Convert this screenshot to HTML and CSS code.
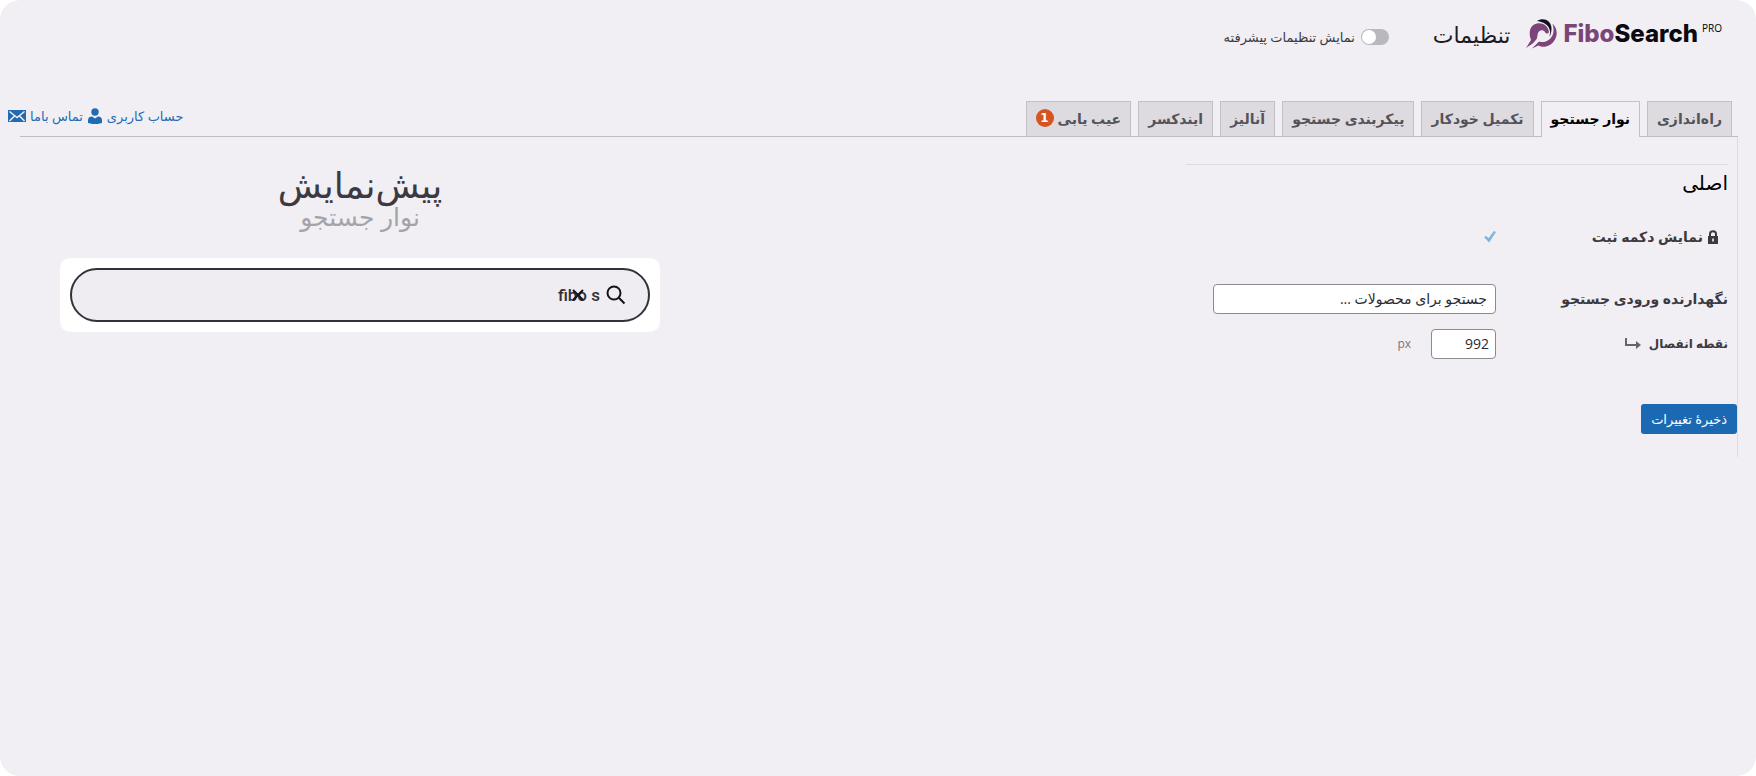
FILE: index.html
```html
<!doctype html>
<html lang="fa" dir="rtl">
  <head>
    <meta charset="UTF-8" />
    <meta name="viewport" content="width=device-width, initial-scale=1.0" />
    <title>FiboSearch - تنظیمات</title>
    <link rel="stylesheet" href="styles.css">
  </head>
  <body>
    <main class="page">
      <header class="header">
        <div class="logo" dir="ltr">
          <svg class="logo-icon" viewBox="0 0 31 30" aria-hidden="true">
            <path fill="#7c4579" d="M0 29 L5 21 C2 13 4 6 11 4.5 C17 3.5 22 7 23 13 C22 15 20 15 19 13 C17 10 13 11 12 14 C11 17 12 19 9 22 C7 25 4 26 0 29Z" />
            <path fill="#7c4579" d="M6 29.5 L13 22.5 C19 24.5 25 21 27 15 C28 11 27.5 8 26.5 4.5 C31 9 32 15 29 20.5 C25 28 17 29 12.5 26.5 Z" />
            <path fill="#14101a" d="M11 2 C17 -2 25 1 25.500 9 C25.500 12 25 15 23.500 18 C23.500 16 24.500 14 24 12 C23 6 18 3 11 2Z" />
          </svg>
          <span class="logo-text"><span class="logo-fibo">Fibo</span>Search</span>
          <sup class="logo-pro">PRO</sup>
        </div>
        <h1 class="page-title">تنظیمات</h1>
        <label class="advanced">
          <input type="checkbox" class="switch" />
          <span>نمایش تنظیمات پیشرفته</span>
        </label>
      </header>

      <div class="tab-bar">
        <nav class="tabs">
          <a href="#" class="tab">راه‌اندازی</a>
          <a href="#" class="tab tab-active">نوار جستجو</a>
          <a href="#" class="tab">تکمیل خودکار</a>
          <a href="#" class="tab">پیکربندی جستجو</a>
          <a href="#" class="tab">آنالیز</a>
          <a href="#" class="tab">ایندکسر</a>
          <a href="#" class="tab">عیب یابی <span class="badge">1</span></a>
        </nav>
        <div class="links">
          <a href="#" class="link">
            <span>حساب کاربری</span>
            <svg width="16" height="16" viewBox="0 0 16 16" aria-hidden="true">
              <circle cx="8" cy="4" r="3.7" />
              <path d="M1 15 V12 C1 9.5 3 8.5 5 8.5 L8 10.5 L11 8.5 C13 8.5 15 9.5 15 12 V15 C11 16.5 5 16.5 1 15Z" />
            </svg>
          </a>
          <a href="#" class="link">
            <span>تماس باما</span>
            <svg width="18" height="14" viewBox="0 0 18 14" aria-hidden="true">
              <rect x="0" y="1" width="18" height="12" />
              <path class="mail-lines" d="M1.5 2.5 L9 8.5 L16.5 2.5 M1.5 12 L6.5 7 M16.5 12 L11.5 7" />
            </svg>
          </a>
        </div>
      </div>

      <div class="content">
        <form class="settings">
          <h2 class="section-title">اصلی</h2>
          <div class="row row-check">
            <label for="submit-button" class="row-label">
              <svg class="lock" width="10" height="14" viewBox="0 0 10 14" aria-hidden="true">
                <path d="M2 7 V4 C2 0.3 8 0.3 8 4 V7" fill="none" stroke="#3c3a41" stroke-width="2" />
                <path d="M0 6 H10 V14 H0Z M4.2 8.5 V11.5 H5.8 V8.5Z" fill="#3c3a41" fill-rule="evenodd" />
              </svg>
              نمایش دکمه ثبت
            </label>
            <input type="checkbox" id="submit-button" class="check" checked disabled />
          </div>
          <div class="row">
            <label for="placeholder" class="row-label">نگهدارنده ورودی جستجو</label>
            <input type="text" id="placeholder" class="field" value="جستجو برای محصولات ..." />
          </div>
          <div class="row">
            <label for="breakpoint" class="row-label row-label-small">
              نقطه انفصال
              <svg class="arrow" width="16" height="12" viewBox="0 0 16 12" aria-hidden="true">
                <path d="M1 0 V7 H13" fill="none" stroke="#66646b" stroke-width="2" />
                <path d="M11 3 L16 7 L11 11Z" fill="#66646b" />
              </svg>
            </label>
            <input type="text" id="breakpoint" class="field field-small" value="992" />
            <span class="unit">px</span>
          </div>
          <button type="submit" class="save">ذخیرهٔ تغییرات</button>
        </form>

        <section class="preview">
          <h2 class="preview-title">پیش‌نمایش</h2>
          <p class="preview-subtitle">نوار جستجو</p>
          <div class="preview-box">
            <div class="search">
              <svg class="search-icon" width="20" height="20" viewBox="0 0 20 20" aria-hidden="true">
                <circle cx="8" cy="8" r="6.5" />
                <path d="M12.8 12.8 L18.5 18.5" />
              </svg>
              <input type="text" class="search-input" aria-label="جستجو" value="fibo s" />
              <button type="button" class="clear" aria-label="پاک کردن">
                <svg width="12" height="12" viewBox="0 0 12 12" aria-hidden="true">
                  <path d="M1 1 L11 11 M11 1 L1 11" />
                </svg>
              </button>
            </div>
          </div>
        </section>
      </div>
    </main>
  </body>
</html>
```
FILE: styles.css
```css
* {
  margin: 0;
  padding: 0;
  box-sizing: border-box;
}

body {
  font-family: "Open Sans", "DejaVu Sans", sans-serif;
  font-size: 13px;
  color: #3c3a41;
  background: #fff;
}

input,
button {
  font-family: inherit;
}

.page {
  min-height: 100vh;
  padding: 14px 18px 0 20px;
  background: #f1eff4;
  border-radius: 20px;
}

.header {
  display: flex;
  align-items: center;
  height: 40px;
  padding-right: 16px;
}

.logo {
  display: flex;
  align-items: center;
}

.logo-icon {
  width: 31px;
  height: 30px;
  margin-right: 6px;
}

.logo-text {
  font-family: "Inter", sans-serif;
  font-size: 24px;
  font-weight: 800;
  line-height: 40px;
  color: #0c0a10;
}

.logo-fibo {
  color: #7c4579;
}

.logo-pro {
  align-self: flex-start;
  margin-left: 4px;
  padding-top: 6px;
  font-size: 10px;
  line-height: 16px;
  color: #000;
}

.page-title {
  margin-right: 16px;
  font-size: 22px;
  font-weight: 400;
  line-height: 36px;
  color: #1d1b22;
}

.advanced {
  display: flex;
  align-items: center;
  gap: 6px;
  margin-right: 44px;
  padding-top: 6px;
  font-size: 13px;
}

.switch {
  appearance: none;
  width: 28px;
  height: 16px;
  padding: 1px;
  background: #bab8bf;
  border-radius: 8px;
}

.switch::before {
  content: "";
  display: block;
  width: 14px;
  height: 14px;
  margin-right: auto;
  background: #fff;
  border-radius: 50%;
}

.tab-bar {
  display: flex;
  justify-content: space-between;
  align-items: flex-end;
  margin-top: 47px;
  border-bottom: 1px solid #bfbdc4;
}

.tabs {
  display: flex;
  gap: 7px;
  margin-right: 6px;
}

.tab {
  display: flex;
  align-items: center;
  gap: 4px;
  height: 35px;
  padding: 0 9px 2px;
  font-size: 14px;
  font-weight: 700;
  color: #55535a;
  text-decoration: none;
  white-space: nowrap;
  background: #dddbe0;
  border: 1px solid #c3c1c8;
  border-bottom: none;
}

.tab-active {
  height: 36px;
  margin-bottom: -1px;
  padding-bottom: 3px;
  color: #000;
  background: #f1eff4;
}

.badge {
  width: 18px;
  height: 18px;
  font-family: "DejaVu Sans", sans-serif;
  font-size: 12px;
  line-height: 18px;
  text-align: center;
  color: #fff;
  background: #d6541f;
  border-radius: 50%;
}

.links {
  display: flex;
  gap: 4px;
  margin: 0 0 11px -12px;
}

.link {
  display: flex;
  align-items: center;
  gap: 4px;
  font-size: 13px;
  color: #1f6cb5;
  text-decoration: none;
}

.link svg {
  fill: #1f6cb5;
}

.link .mail-lines {
  fill: none;
  stroke: #f1eff4;
  stroke-width: 1.5;
}

.content {
  display: flex;
  justify-content: space-between;
}

.settings {
  flex: 0 1 552px;
  padding-top: 27px;
  padding-bottom: 23px;
  border-right: 1px solid #dddbe0;
}

.section-title {
  margin-right: 9px;
  padding-top: 4px;
  font-size: 20px;
  font-weight: 400;
  line-height: 28px;
  color: #000;
  border-top: 1px solid #dddbe0;
}

.row {
  display: flex;
  align-items: center;
  height: 45px;
  padding-right: 9px;
}

.row-check {
  height: 79px;
}

.row-label {
  display: flex;
  align-items: center;
  flex: 0 0 232px;
  font-size: 14px;
  font-weight: 700;
}

.row-label-small {
  font-size: 12px;
}

.lock {
  margin: 0 10px 0 5px;
}

.arrow {
  margin-right: 8px;
}

.check {
  appearance: none;
  width: 12px;
  height: 12px;
  background: #7db5dd;
  clip-path: polygon(0 55%, 18% 45%, 38% 65%, 82% 5%, 100% 12%, 42% 100%);
}

.field {
  width: 283px;
  height: 30px;
  padding: 0 8px;
  font-size: 14px;
  color: #2c2a31;
  background: #fff;
  border: 1px solid #8c8a91;
  border-radius: 4px;
}

.field-small {
  width: 65px;
  padding: 0 6px;
}

.unit {
  margin-right: 20px;
  font-size: 12px;
  color: #77757c;
}

.save {
  display: block;
  height: 30px;
  margin-top: 38px;
  padding: 0 10px;
  font-size: 13px;
  color: #fff;
  background: #1b68b3;
  border: none;
  border-radius: 3px;
}

.preview {
  flex: 0 1 600px;
  margin-left: 40px;
  padding-top: 28px;
  text-align: center;
}

.preview-title {
  font-size: 36px;
  font-weight: 400;
  line-height: 40px;
}

.preview-subtitle {
  font-size: 25px;
  line-height: 22px;
  color: #a5a3aa;
}

.preview-box {
  margin-top: 31px;
  padding: 10px;
  background: #fff;
  border-radius: 10px;
}

.search {
  position: relative;
  display: flex;
  align-items: center;
  gap: 6px;
  height: 54px;
  padding: 0 22px;
  background: #efedf1;
  border: 2px solid #333138;
  border-radius: 27px;
}

.search-icon {
  fill: none;
  stroke: #151318;
  stroke-width: 2;
}

.search-input {
  flex: 1;
  font-family: "Roboto", sans-serif;
  font-size: 17px;
  font-weight: 500;
  color: #333138;
  background: none;
  border: none;
  outline: none;
}

.clear {
  position: absolute;
  right: 64px;
  display: flex;
  background: none;
  border: none;
}

.clear path {
  stroke: #151318;
  stroke-width: 2;
}
```
